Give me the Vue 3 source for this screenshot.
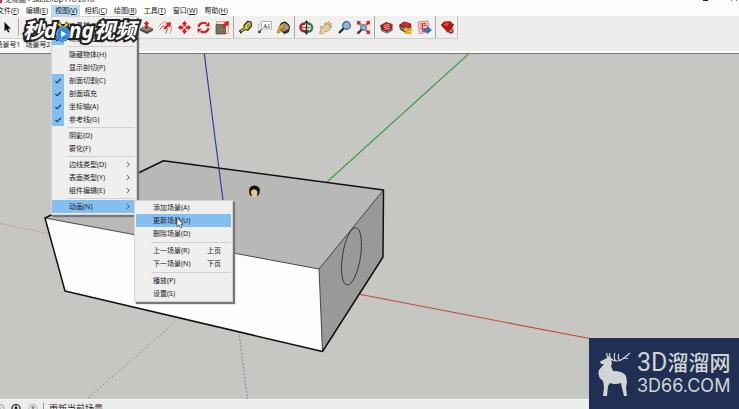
<script setup>
import { ref } from 'vue'

const menus = [
  { label: '文件', key: 'F' },
  { label: '编辑', key: 'E' },
  { label: '视图', key: 'V' },
  { label: '相机', key: 'C' },
  { label: '绘图', key: 'R' },
  { label: '工具', key: 'T' },
  { label: '窗口', key: 'W' },
  { label: '帮助', key: 'H' }
]
const openMenu = ref('V')

const viewMenu = [
  [{ text: '工具栏(T)...' }, { text: '场景标签(S)', checked: true }],
  [
    { text: '隐藏物体(H)' },
    { text: '显示剖切(P)' },
    { text: '剖面切割(C)', checked: true },
    { text: '剖面填充', checked: true },
    { text: '坐标轴(A)', checked: true },
    { text: '参考线(G)', checked: true }
  ],
  [{ text: '阴影(D)' }, { text: '雾化(F)' }],
  [
    { text: '边线类型(D)', more: true },
    { text: '表面类型(Y)', more: true },
    { text: '组件编辑(E)', more: true }
  ],
  [{ text: '动画(N)', more: true, open: true }]
]

const animationMenu = [
  [{ text: '添加场景(A)' }, { text: '更新场景(U)', active: true }, { text: '删除场景(D)' }],
  [{ text: '上一场景(R)', hint: '上页' }, { text: '下一场景(N)', hint: '下页' }],
  [{ text: '播放(P)' }, { text: '设置(S)' }]
]

const toolGroups = [
  ['push', 'offset', 'move', 'rotate', 'scale'],
  ['tape', 'label', 'paint'],
  ['orbit', 'pan', 'zoom', 'extents'],
  ['warehouse', 'extension', 'layout'],
  ['ruby']
]
</script>

<template>
  <div class="window">
    <header class="titlebar">
      <span class="app-mark"></span>
      <span>无标题 - SketchUp Pro 2018</span>
      <span class="win-min"></span>
      <span class="win-max"></span>
    </header>

    <nav class="menubar">
      <div v-for="m in menus" :key="m.key" class="menu-slot">
        <button class="menu-head" :class="{ on: openMenu === m.key }">{{ m.label }}(<u>{{ m.key }}</u>)</button>
        <div v-if="openMenu === m.key" class="popup main-popup">
          <div v-for="(group, gi) in viewMenu" :key="gi" class="group">
            <div v-for="item in group" :key="item.text" class="row-slot">
              <button class="row" :class="{ active: item.open }">
                <span class="check" :class="{ ticked: item.checked }">
                  <svg v-if="item.checked" width="8" height="8" viewBox="0 0 8 8"><path d="M1.5 4 3.2 5.8 6.8 2" fill="none" stroke="#16334f" stroke-width="1.1" /></svg>
                </span>
                <span class="text">{{ item.text }}</span>
                <svg v-if="item.more" class="more" width="5" height="7" viewBox="0 0 5 7"><path d="M1 1.2 3.3 3.5 1 5.8" fill="none" stroke="#333" stroke-width=".9" /></svg>
              </button>
              <div v-if="item.open" class="popup sub-popup">
                <div v-for="(sg, si) in animationMenu" :key="si" class="group">
                  <button v-for="s in sg" :key="s.text" class="row" :class="{ active: s.active }">
                    <span class="check"></span>
                    <span class="text">{{ s.text }}</span>
                    <span v-if="s.hint" class="hint">{{ s.hint }}</span>
                    <svg v-if="s.active" class="pointer" width="8" height="12" viewBox="0 0 8 12"><path d="M1 .8V9.600L3 7.800 4.400 11 6 10.300 4.700 7.200H7.300Z" fill="#fff" stroke="#333" stroke-width=".7" /></svg>
                  </button>
                </div>
              </div>
            </div>
          </div>
        </div>
      </div>
    </nav>

    <div class="toolbar">
      <button class="tool select" aria-label="选择">
        <svg width="14" height="14" viewBox="0 0 14 14"><path d="M4.500 2V11.300L6.600 9.400 8 12.600 9.500 11.900 8.100 8.800H11Z" fill="#111" /></svg>
      </button>
      <div v-for="(g, i) in toolGroups" :key="i" class="tools" :class="{ first: i === 0 }">
        <button v-for="t in g" :key="t" class="tool" :aria-label="t">
          <svg width="15" height="15" viewBox="0 0 15 15">
            <g v-if="t === 'push'">
              <path d="M1 8.500 7 5.500 14 8.500V10.500L8 14 1 10.500Z" fill="#4c4b40" />
              <path d="M1 8.500 7 5.500 14 8.500 8 11.500Z" fill="#8d8b77" />
              <path d="M7.500 1 10 4H8.500V8.500H6.500V4H5Z" fill="#e01b1b" stroke="#a31414" stroke-width=".4" />
            </g>
            <g v-else-if="t === 'offset'" fill="none">
              <path d="M1 6.500C4 1 11 .500 13 5.500 14 9 13 12 11.500 14" stroke="#e88" />
              <path d="M2 9.500C4 5.500 8 5 9 8 9.500 10 8.500 12 7.500 13.500" stroke="#8d4b46" />
              <path d="M5.500 8.500 9 5 7.500 3.500 13 2 12 7.500 10.500 6.300 7 9.800Z" fill="#e01b1b" />
            </g>
            <g v-else-if="t === 'move'" fill="#dd1c1c">
              <path d="M7.500 .8 10.300 4.200H8.700V6.300H6.300V4.200H4.700ZM7.500 14.200 4.700 10.800H6.300V8.700H8.700V10.800H10.300ZM.8 7.500 4.200 4.700V6.300H6.300V8.700H4.200V10.300ZM14.200 7.500 10.800 10.300V8.700H8.700V6.300H10.800V4.700Z" />
              <circle cx="7.500" cy="7.500" r=".8" fill="#f3c9c5" />
            </g>
            <g v-else-if="t === 'rotate'">
              <path d="M2.500 7A5 4.800 0 0 1 10.500 3.800M12.500 8A5 4.800 0 0 1 4.500 11.200" fill="none" stroke="#d42020" stroke-width="2.200" />
              <path d="M9.200 6.500 13.800 6.300 13 1.800ZM5.800 8.500 1.200 8.700 2 13.200Z" fill="#d42020" />
            </g>
            <g v-else-if="t === 'scale'">
              <path d="M1.500 1.500H13.500V13.500H1.500Z" fill="#f4ded9" stroke="#ef8b80" stroke-width=".8" />
              <path d="M1 4.500H10.500V14H1Z" fill="#77745f" stroke="#474538" stroke-width=".7" />
              <path d="M7 7 10 4 8.500 2.500 14 1 13 6.500 11.500 5.300 8.500 8.300Z" fill="#dc2020" />
            </g>
            <g v-else-if="t === 'tape'">
              <path d="M6 5.500 9.500 1.500 13 2 13.500 6 10 10 6.500 9.500Z" fill="#e3cf25" stroke="#29291f" stroke-width="1.200" />
              <path d="M8.500 6.500 10 3.500 11.800 4 11.500 6.500 9.500 8Z" fill="#8e9185" />
              <path d="M6.500 8.500 2 12" stroke="#29291f" stroke-width="3" /><path d="M7 8 2.500 11.500" stroke="#e6cd1f" stroke-width="1.500" /><path d="M1.500 10.500 3 13.500" stroke="#111" />
            </g>
            <g v-else-if="t === 'label'">
              <path d="M4.500 1.500H14.500V9H4.500Z" fill="#fff" stroke="#999" stroke-width=".7" />
              <text x="6" y="7.500" class="label-glyph">A1</text>
              <path d="M4.500 4H1.500V13" fill="none" stroke="#aaa" stroke-width=".7" /><path d="M4.500 9 2 13" stroke="#222" /><circle cx="2.500" cy="12" r="1.200" fill="#222" />
            </g>
            <g v-else-if="t === 'paint'">
              <path d="M4 5 9 1.500 13.500 6 12.500 12 8 13.500 5 10Z" fill="#8d8b79" stroke="#272720" />
              <path d="M5 5Q8 3 10.500 7L12 10" fill="none" stroke="#ddd9c4" /><path d="M4 4.500Q8 0 13 5" fill="none" stroke="#26251f" /><path d="M7 12Q11 13 12.500 9" fill="none" stroke="#26251f" stroke-width="1.400" />
              <path d="M9 5Q4 4 2.500 8L1 13 4 12.500 5.500 8.500 9 7Z" fill="#e8a321" stroke="#855510" stroke-width=".5" />
            </g>
            <g v-else-if="t === 'orbit'" fill="none">
              <path d="M6 3.500Q1 4 1.500 8T7 11" stroke="#a22222" stroke-width="2.400" /><path d="M8.500 3.500Q14 4 13 8.500T7.500 10.500" stroke="#268257" stroke-width="2.400" />
              <path d="M3 7.500H11" stroke="#c94848" stroke-width="1.500" /><path d="M7.500 1V14M5.500 3.500 7.500 1 9.500 3.500M5.500 11.500 7.500 14 9.500 11.500" stroke="#3a2926" stroke-width="1.200" />
            </g>
            <path v-else-if="t === 'pan'" d="M1.500 13.500 3 9 2.500 6 4 6.500 5 8 7.500 2.500 8.500 2.500 8 5.500 10.500 1.500 11.500 2 10.200 5.500 13 3 13.500 4 11.300 7 13.800 6 13 8 10 11 6.500 12 4.500 14Z" fill="#eac99a" stroke="#9b8058" stroke-width=".6" />
            <g v-else-if="t === 'zoom'">
              <path d="M7 8 2 13" stroke="#252a32" stroke-width="2.300" /><circle cx="9.500" cy="5.500" r="3.800" fill="#8bb6e4" stroke="#46566d" stroke-width="1.200" />
            </g>
            <g v-else-if="t === 'extents'">
              <path d="M5.500 9.500 2 13.500" stroke="#2d3440" stroke-width="2" />
              <circle cx="7.500" cy="7.500" r="2.900" fill="#8bb6e4" stroke="#46566d" />
              <path d="M1 1H5L3.900 2.300 5.500 4 4 5.500 2.300 3.900 1 5ZM14 1V5L12.700 3.900 11 5.500 9.500 4 11.100 2.300 10 1ZM14 14H10L11.100 12.700 9.500 11 11 9.500 12.700 11.100 14 10Z" fill="#d82828" /><path d="M1 14V11L3.500 13.500Z" fill="#d82828" />
            </g>
            <g v-else-if="t === 'warehouse'">
              <path d="M1 5.500 7 2 13.500 4V10.500L8 13.500 2.500 11Z" fill="#5a3d38" /><path d="M3 4.500 8 2.500 12.500 4.500 11 10 5.500 10.500Z" fill="#cc2424" />
              <path d="M5 5.500 10 4.500M5 7.500 10.500 6.500M6 9.300 10.500 8.500" stroke="#f3b5ac" stroke-width=".9" /><path d="M3 10.500 8 12.500 13 9.500" fill="none" stroke="#999" />
            </g>
            <g v-else-if="t === 'extension'">
              <path d="M1 5 6 1.500 13 3.500 13.500 9 7 12.500 2 9.500Z" fill="#543b36" /><path d="M3 4.500 7 2 12 4 11 7.500 5 8Z" fill="#d52424" /><path d="M2.500 7.500 7 10" stroke="#bbb" />
              <circle cx="8" cy="9.500" r="2" fill="#eebb30" /><circle cx="12" cy="9.500" r="2" fill="#e7a820" /><path d="M6 14Q8 9.500 10 12 12 10 14 14Z" fill="#e4a51f" />
            </g>
            <g v-else-if="t === 'layout'">
              <path d="M1 2 11 1 12.500 12 2.500 13.500Z" fill="#fbd6d1" stroke="#e86a62" stroke-width=".8" />
              <path d="M3 4 9.500 3.200M3.300 6.200 10 5.500M3.600 8.500 6 8.200M5.500 3.700V12M8 3V6" stroke="#e02a2a" stroke-width=".9" />
              <path d="M6.500 8.500H10V6.500L14.500 10 10 13.500V11.500H6.500Z" fill="#2b77c4" stroke="#15508c" stroke-width=".5" />
            </g>
            <g v-else>
              <path d="M1 5 4 2 10 1.500 13.500 4.500 12 8 8 12.500Z" fill="#b91616" stroke="#751010" stroke-width=".6" /><path d="M3 5 6 2.700 9 3 7.500 6Z" fill="#ee4a43" />
              <circle cx="11" cy="11" r="2.600" fill="#8e3431" /><circle cx="11" cy="11" r="1" fill="#efaaa4" />
            </g>
          </svg>
        </button>
      </div>
    </div>

    <div class="tabs">
      <button class="tab current">场景号1</button>
      <button class="tab">场景号2</button>
    </div>

    <main class="viewport">
      <svg class="scene" viewBox="0 54 739 345" preserveAspectRatio="xMinYMin slice">
        <path d="M0 223.500 60 236" stroke="#c4685c" stroke-width=".9" stroke-dasharray="1 2" />
        <path d="M88 398 182 316" stroke="#4d9a58" stroke-width=".9" stroke-dasharray="1.500 2.500" />
        <path d="M238 325 247.500 399" stroke="#6464b4" stroke-width=".9" stroke-dasharray="1.500 2" />
        <path d="M327 182 468.500 54" stroke="#3f9e45" stroke-width="1.200" />
        <path d="M358 294 600 340.500" stroke="#bd4b38" stroke-width="1.100" />
        <path d="M45 218 163.500 160.700 383.500 190 319 269Z" fill="#b8b8b7" />
        <path d="M45 218 319 269 322.500 351.500 65 291Z" fill="#fdfdfc" />
        <path d="M319 269 383.500 190 383 257 322.500 351.500Z" fill="#999998" />
        <path d="M45 218 319 269 383.500 190M319 269 322.500 351.500" fill="none" stroke="#3a3a3a" stroke-width=".9" />
        <path d="M45 218 163.500 160.700 383.500 190 383 257 322.500 351.500 65 291Z" fill="none" stroke="#111" stroke-width="1.500" stroke-linejoin="round" />
        <ellipse cx="351.500" cy="256.300" rx="9" ry="29" transform="rotate(9 351.500 256.300)" fill="none" stroke="#333" stroke-width=".9" />
        <path d="M204.300 54 224 208" stroke="#3a3aa6" stroke-width="1.200" />
        <path d="M250 195.500Q247 186 254.300 185.500 262 186 259 194.500L257.500 196H251.500Z" fill="#17110e" />
        <path d="M250.800 191.500Q254 187 257.500 191.500L257 196.700H252Z" fill="#e9c291" />
      </svg>
    </main>

    <footer class="status">
      <svg width="41" height="11" viewBox="0 0 41 11" fill="none">
        <circle cx="0" cy="5.500" r="4" stroke="#999" /><path d="M0 4V8" stroke="#888" />
        <circle cx="16" cy="5.500" r="4" stroke="#222" stroke-width="1.200" /><path d="M16 2.500V8M14.500 5H17.500" stroke="#222" stroke-width="1.300" />
        <circle cx="33" cy="5.500" r="4" stroke="#aaa" /><circle cx="33" cy="4.500" r="1.500" fill="#888" /><path d="M30.500 8Q33 5 35.500 8Z" fill="#888" />
      </svg>
      <span class="status-text">更新当前场景</span>
    </footer>

    <div class="video-mark">
      <span>秒d</span><span class="play">o<svg width="20" height="24" viewBox="0 0 20 24">
        <path d="M8 7 5 3M12 7 15 3" stroke="#222" stroke-width="4" /><path d="M8.500 7 5.500 3.500M11.500 7 14.500 3.500" stroke="#f2cf2f" stroke-width="2" />
        <circle cx="10" cy="14" r="7" fill="#2486e5" stroke="#222" stroke-width="1" /><circle cx="10" cy="14" r="6" fill="#2486e5" stroke="#cfe6fb" stroke-width=".8" /><path d="M8 10.500V17.500L13.500 14Z" fill="#fff" />
      </svg></span><span>ng视频</span>
    </div>

    <aside class="brand">
      <svg width="32" height="48" viewBox="0 0 32 48">
        <path d="M2 11.500 9 8 10 6 13 9 14 13 13 16 15 21Q25 21 28 26L29 32 28 38 29 46H26L24 38 23 33Q17 35 12 33L10 36 9 46H5L6 37 5 31Q-1 27 1 20L6 14 3 14Z" fill="#d3d4d4" />
        <path d="M11 8Q19 14 26 8L32 3M11 8Q8 6 9 3M15 10Q10 7 12 3M18 11Q15 8 17 3M22 10.500Q19 8 21 4M25 8 30 8.500" fill="none" stroke="#d3d4d4" stroke-width="1.200" />
      </svg>
      <div class="brand-text">
        <div class="brand-name"><span class="three-d">3D</span><span>溜溜网</span></div>
        <div class="brand-url">3D66.COM</div>
      </div>
    </aside>
  </div>
</template>

<style>
body {
  overflow: hidden;
}
</style>

<style scoped>
.window {
  position: relative;
  display: flex;
  flex-direction: column;
  height: 100vh;
  overflow: hidden;
  background: #ececeb;
  color: #222;
  font-family: "Noto Sans", "Noto Sans CJK SC", sans-serif;
  font-size: 7px;
}
button {
  margin: 0;
  padding: 0;
  border: 0;
  background: none;
  color: inherit;
  font: inherit;
  white-space: nowrap;
}
.titlebar {
  display: flex;
  align-items: flex-end;
  gap: 3px;
  height: 5px;
  padding-bottom: 2px;
  box-sizing: border-box;
  overflow: hidden;
  background: #fdfdfb;
  line-height: 7px;
}
.app-mark {
  width: 2px;
  height: 3px;
  background: #d33;
}
.win-min {
  width: 5px;
  height: 1px;
  margin: 0 20px 2px auto;
  background: #222;
}
.win-max {
  width: 4px;
  height: 1px;
  margin: 0 2px 2px 0;
  border: solid #777;
  border-width: 0 1px;
}
.menubar {
  display: flex;
  margin-left: -7px;
  height: 11px;
  background: #fdfdfb;
}
.menu-slot {
  position: relative;
}
.menu-head {
  display: block;
  height: 11px;
  padding: 0 3px 0 4px;
  line-height: 11px;
}
.menu-head.on {
  background: #b9dcf5;
}
.menu-head u {
  text-underline-offset: 1px;
}
.popup {
  position: absolute;
  box-sizing: border-box;
  border: 1px solid #d2d2d1;
  background: #efefee;
  box-shadow: 2px 2px 1px #777;
}
.main-popup {
  z-index: 3;
  top: 100%;
  left: 0;
  width: 86px;
  padding: 2px 1px 1px 0;
}
.sub-popup {
  top: 0;
  left: 82px;
  width: 99px;
  padding: 0 1px 1px;
}
.group + .group {
  border-top: 1px solid transparent;
  border-image: linear-gradient(to right, transparent 16px, #d0d0cf 16px) 1;
  margin-top: 1px;
  padding-top: 1px;
}
.sub-popup .group + .group {
  margin-top: 2px;
}
.row-slot {
  position: relative;
}
.row {
  position: relative;
  display: flex;
  align-items: center;
  width: 100%;
  height: 13px;
  line-height: 13px;
}
.row.active {
  background: #84bff2;
}
.check {
  display: flex;
  align-items: center;
  justify-content: center;
  width: 12px;
  height: 13px;
  margin-right: 5px;
}
.check.ticked {
  background: #84bff2;
}
.more {
  margin: 0 4px 0 auto;
}
.hint {
  margin: 0 10px 0 auto;
}
.pointer {
  position: absolute;
  top: 3px;
  left: 40px;
}
.toolbar {
  display: flex;
  align-items: center;
  align-self: flex-start;
  height: 22px;
  border-right: 1px solid #c4c4c3;
  border-bottom: 1px solid #cfcfce;
  background: #f0f0ef;
}
.tools {
  display: flex;
}
.tools + .tools {
  padding-left: 2px;
  margin-left: 1px;
  border-left: 1px solid #aaa;
}
.tools.first {
  margin-left: 118px;
}
.tool {
  display: flex;
  align-items: center;
  justify-content: center;
  width: 19px;
  height: 22px;
}
.tool.select {
  border-right: 1px solid #aaa;
  padding-right: 4px;
  height: 18px;
}
.label-glyph {
  font: 6px "Liberation Serif", serif;
}
.tabs {
  display: flex;
  height: 14px;
  margin-left: -7px;
  border-bottom: 2px solid #fcfcfb;
  box-sizing: border-box;
}
.tab {
  width: 30px;
  height: 12px;
  padding-bottom: 1px;
  line-height: 11px;
  text-align: center;
  background: #f0f0ef;
}
.tab.current {
  background: #fdfdfb;
}
.viewport {
  flex: 1;
  min-height: 0;
  overflow: hidden;
  border-top: 1px solid #777;
  background: #c6c7c2;
}
.scene {
  display: block;
  width: 100%;
  height: 100%;
}
.status {
  display: flex;
  align-items: flex-start;
  gap: 2px;
  height: 10px;
  padding-top: 3px;
  box-sizing: border-box;
  overflow: hidden;
  background: #ececeb;
  border-top: 1px solid #f7f7f6;
}
.status-text {
  padding-left: 5px;
  border-left: 1px solid #999;
  font-size: 9px;
  line-height: 11px;
}
.video-mark {
  position: absolute;
  z-index: 4;
  top: 16px;
  left: 23px;
  color: #fff;
  font-size: 21px;
  font-weight: 700;
  font-style: italic;
  line-height: 28px;
  white-space: nowrap;
  -webkit-text-stroke: 4px #222;
  paint-order: stroke fill;
}
.play {
  position: relative;
}
.play svg {
  position: absolute;
  left: -3px;
  top: 4px;
}
.brand {
  position: absolute;
  z-index: 2;
  right: 0;
  bottom: 0;
  display: flex;
  align-items: center;
  gap: 7px;
  width: 150px;
  height: 71px;
  padding-left: 9px;
  box-sizing: border-box;
  background: #203055;
  color: #d3d4d4;
}
.brand-name {
  display: flex;
  align-items: center;
  height: 25px;
  font-size: 21px;
  font-weight: 500;
  line-height: 25px;
}
.three-d {
  font-family: Roboto, sans-serif;
  font-size: 25px;
  font-weight: 400;
}
.brand-url {
  font-family: Inter, sans-serif;
  font-size: 18px;
  line-height: 22px;
}
</style>
